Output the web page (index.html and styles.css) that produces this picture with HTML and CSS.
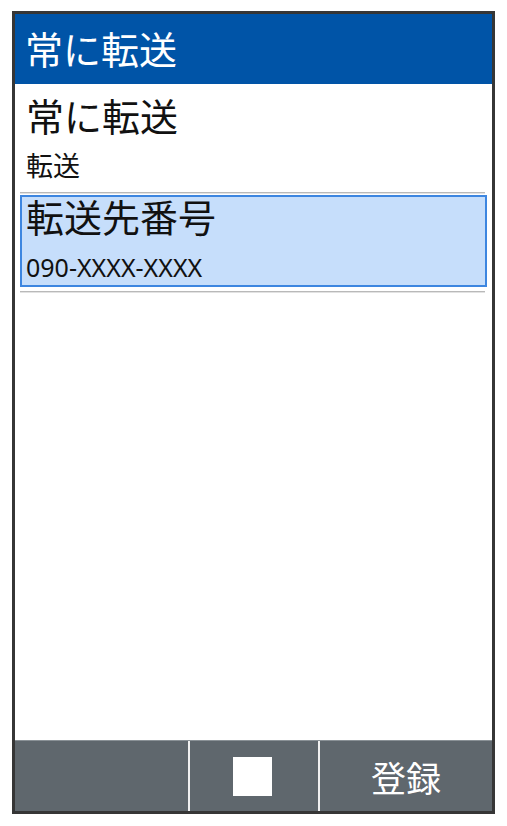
FILE: index.html
```html
<!DOCTYPE html>
<html lang="ja">
<head>
<meta charset="utf-8">
<link rel="stylesheet" href="styles.css">
</head>
<body>
<div class="frame">
  <div class="header">常に転送</div>
  <div class="content">
    <div class="item">
      <div class="item-title">常に転送</div>
      <div class="item-sub">転送</div>
    </div>
    <div class="sep"></div>
    <div class="item selected">
      <div class="item-title">転送先番号</div>
      <div class="item-num">090-XXXX-XXXX</div>
    </div>
    <div class="sep"></div>
  </div>
  <div class="footer">
    <div class="key key-left"></div>
    <div class="key key-mid"><span class="square"></span></div>
    <div class="key key-right">登録</div>
  </div>
</div>
</body>
</html>
```
FILE: styles.css
```css
html, body {
  margin: 0;
  padding: 0;
  background: #ffffff;
}
body {
  font-family: "Noto Sans CJK JP", "Noto Sans", sans-serif;
}
.frame {
  box-sizing: border-box;
  width: 483px;
  height: 803px;
  margin: 11px 0 0 12px;
  border: 3px solid #363636;
  display: flex;
  flex-direction: column;
  background: #ffffff;
}
.header {
  height: 70px;
  background: #0054a7;
  color: #ffffff;
  font-size: 38px;
  line-height: 68px;
  padding-left: 10px;
  flex: none;
}
.content {
  flex: 1;
  display: flex;
  flex-direction: column;
}
.item {
  padding-left: 11px;
}
.item-title {
  font-size: 38px;
  line-height: 38px;
  color: #111;
  padding-top: 12px;
}
.item-sub {
  font-size: 27px;
  line-height: 27px;
  color: #111;
  padding-top: 17px;
  padding-bottom: 14px;
}
.sep {
  height: 1px;
  background: #b9b9b9;
  margin: 0 7px 0 5px;
  box-shadow: 0 1px 0 #e2e2e2;
}
.selected {
  margin: 2px 5px 4px 5px;
  border: 2px solid #3d86e0;
  background: #c6defb;
  padding-left: 4px;
  height: 88px;
}
.selected .item-title {
  padding-top: 0;
}
.item-num {
  font-family: "Noto Sans", "Open Sans", sans-serif;
  font-size: 25px;
  line-height: 25px;
  color: #111;
  padding-top: 20px;
}
.footer {
  height: 70px;
  flex: none;
  display: flex;
  background: #5f676d;
  border-top: 1px solid #8a9196;
}
.key {
  display: flex;
  align-items: center;
  justify-content: center;
  color: #ffffff;
}
.key-left {
  width: 173px;
  border-right: 2px solid #f0f0f0;
}
.key-mid {
  width: 128px;
  border-right: 2px solid #f0f0f0;
}
.key-right {
  flex: 1;
  font-size: 35px;
}
.square {
  display: block;
  width: 39px;
  height: 39px;
  background: #ffffff;
  margin-left: -4px;
}
```
